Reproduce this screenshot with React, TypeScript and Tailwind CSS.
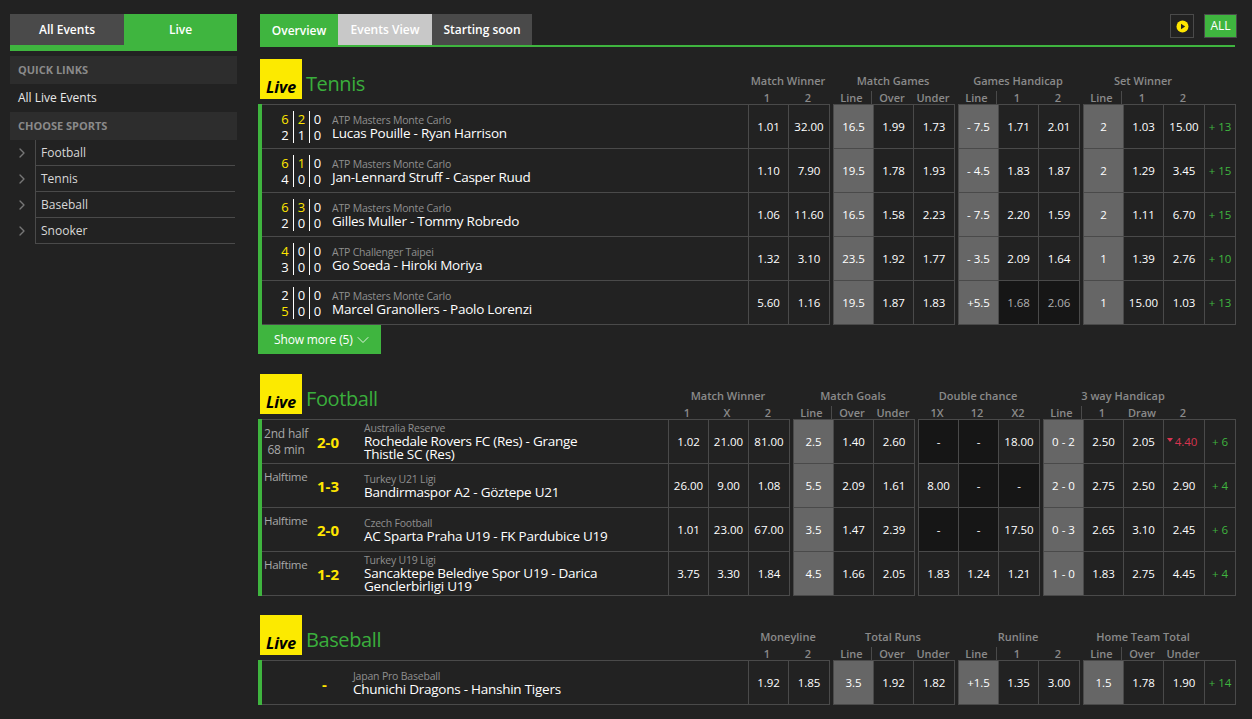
import type { ReactNode } from 'react';
import { ChevronRight, ChevronDown } from 'lucide-react';

type Cell = string | { v: string; dark?: boolean; dim?: boolean; down?: boolean };

type Col = { title: string; subs: string[] };

type Row = {
  info: ReactNode;
  groups: Cell[][];
  more: string;
};

const d = (v: string): Cell => ({ v, dark: true, dim: v !== '-' });
const dash: Cell = { v: '-', dark: true };

function SetScores({ a, b, hi }: { a: string[]; b: string[]; hi: string[] }) {
  return (
    <div className="ml-[15px] flex w-[48px] shrink-0 text-[13px] leading-[16px]">
      {a.map((top, i) => (
        <div
          key={i}
          className={`flex h-[32px] w-[16px] flex-col items-center justify-center ${i > 0 ? 'border-l border-white' : ''}`}
        >
          <span className={hi[i] === 'a' ? 'text-[#ffe600]' : 'text-white'}>{top}</span>
          <span className={hi[i] === 'b' ? 'text-[#ffe600]' : 'text-white'}>{b[i]}</span>
        </div>
      ))}
    </div>
  );
}

function TennisInfo({ a, b, hi, league, name }: { a: string[]; b: string[]; hi: string[]; league: string; name: string }) {
  return (
    <div className="flex h-full items-center">
      <SetScores a={a} b={b} hi={hi} />
      <div className="ml-[7px]">
        <Names league={league} name={name} />
      </div>
    </div>
  );
}

function Names({ league, name }: { league: string; name: string }) {
  return (
    <div>
      <div className="text-[10.5px] leading-[13px] tracking-[-0.2px] text-[#8f8f8f]">{league}</div>
      <div className="text-[13.5px] leading-[13px] tracking-[-0.25px] text-white">{name}</div>
    </div>
  );
}

function FootballInfo({ time, score, league, name, top }: { time: string[]; score: string; league: string; name: string; top?: boolean }) {
  return (
    <div className="flex h-full items-center">
      <div className={`flex w-[46px] shrink-0 flex-col self-stretch whitespace-nowrap pl-[2px] leading-[16px] text-[#a8a8a8] ${top ? 'justify-start pt-[5px] text-[11.5px] tracking-[-0.3px]' : 'justify-center text-center text-[12px] tracking-[-0.2px]'}`}>
        {time.map((t) => (
          <span key={t}>{t}</span>
        ))}
      </div>
      <div className="ml-[9px] mt-[1px] w-[47px] shrink-0 text-[15px] font-bold text-[#ffe600]">{score}</div>
      <div className="w-[250px]">
        <Names league={league} name={name} />
      </div>
    </div>
  );
}

function BaseballInfo({ league, name }: { league: string; name: string }) {
  return (
    <div className="flex h-full items-center">
      <div className="ml-[60px] mt-[3px] w-[31px] shrink-0 text-[15px] font-bold text-[#ffe600]">-</div>
      <Names league={league} name={name} />
    </div>
  );
}

function OddCell({ cell, line, last, top }: { cell: Cell; line: boolean; last: boolean; top: boolean }) {
  const c = typeof cell === 'string' ? { v: cell } : cell;
  const o = c as { v: string; dark?: boolean; dim?: boolean; down?: boolean };
  return (
    <div
      className={`relative flex h-full items-center justify-center border-b border-l border-[#4a4a4a] text-[11.5px] ${top ? 'border-t' : ''} ${last ? 'w-[41px]' : 'w-[40px]'} ${line ? 'bg-[#666666]' : o.dark ? 'bg-[#161616]' : ''} ${o.dim ? 'text-[#b0b0b0]' : o.down ? 'pr-[4px] text-[#d8344f]' : 'text-white'}`}
    >
      {o.down && <span className="mb-[3px] mr-[2px] border-x-[3px] border-t-[4px] border-x-transparent border-t-[#d8344f]" />}
      {o.v}
    </div>
  );
}

function Section({ title, cols, rows, children }: { title: string; cols: Col[]; rows: Row[]; children?: ReactNode }) {
  return (
    <section>
      <div className="flex h-[45px] items-start">
        <div className="ml-[2px] flex h-[40px] w-[42px] shrink-0 items-end justify-center bg-[#fcea00] pb-[1px] text-[16px] font-bold italic leading-[22px] text-black">
          Live
        </div>
        <div className="ml-[4px] mt-[10px] flex-1 text-[20px] leading-[30px] tracking-[-0.4px] text-[#3aae3c]">{title}</div>
        <div className="flex">
          {cols.map((col, i) => (
            <div key={col.title} className={`${i > 0 ? 'ml-[3px]' : ''} ${i === cols.length - 1 ? 'pr-[32px]' : ''}`}>
              <div className="mt-[15px] h-[17px] text-center text-[11px] font-semibold leading-[14px] text-[#8a8a8a]">{col.title}</div>
              <div className="flex h-[13px] text-[11px] font-semibold leading-[13px] text-[#8a8a8a]">
                {col.subs.map((s, j) => (
                  <div
                    key={j}
                    className={`text-center ${j === col.subs.length - 1 ? 'w-[42px]' : 'w-[40px]'} ${s === 'Line' ? 'border-r border-[#4a4a4a]' : ''}`}
                  >
                    {s}
                  </div>
                ))}
              </div>
            </div>
          ))}
        </div>
      </div>
      <div className="border-l-[4px] border-[#3fb53f]">
        {rows.map((row, r) => (
          <div key={r} className={`flex ${r === 0 ? 'h-[45px]' : 'h-[44px]'}`}>
            <div className={`min-w-0 flex-1 border-b border-[#4a4a4a] ${r === 0 ? 'border-t' : ''}`}>{row.info}</div>
            {row.groups.map((g, i) => (
              <div key={i} className={`flex ${i > 0 ? 'ml-[3px]' : ''} ${i < row.groups.length - 1 ? 'border-r border-[#4a4a4a]' : ''}`}>
                {g.map((cell, j) => (
                  <OddCell key={j} cell={cell} line={cols[i].subs[j] === 'Line'} last={j === g.length - 1} top={r === 0} />
                ))}
              </div>
            ))}
            <div className={`flex w-[32px] items-center justify-center border-x border-b border-[#4a4a4a] text-[11.5px] text-[#3fb53f] ${r === 0 ? 'border-t' : ''}`}>
              {row.more}
            </div>
          </div>
        ))}
      </div>
      {children}
    </section>
  );
}

const tennisCols: Col[] = [
  { title: 'Match Winner', subs: ['1', '2'] },
  { title: 'Match Games', subs: ['Line', 'Over', 'Under'] },
  { title: 'Games Handicap', subs: ['Line', '1', '2'] },
  { title: 'Set Winner', subs: ['Line', '1', '2'] },
];

const tennisRows: Row[] = [
  {
    info: <TennisInfo a={['6', '2', '0']} b={['2', '1', '0']} hi={['a', 'a', '']} league="ATP Masters Monte Carlo" name="Lucas Pouille - Ryan Harrison" />,
    groups: [['1.01', '32.00'], ['16.5', '1.99', '1.73'], ['- 7.5', '1.71', '2.01'], ['2', '1.03', '15.00']],
    more: '+ 13',
  },
  {
    info: <TennisInfo a={['6', '1', '0']} b={['4', '0', '0']} hi={['a', 'a', '']} league="ATP Masters Monte Carlo" name="Jan-Lennard Struff - Casper Ruud" />,
    groups: [['1.10', '7.90'], ['19.5', '1.78', '1.93'], ['- 4.5', '1.83', '1.87'], ['2', '1.29', '3.45']],
    more: '+ 15',
  },
  {
    info: <TennisInfo a={['6', '3', '0']} b={['2', '0', '0']} hi={['a', 'a', '']} league="ATP Masters Monte Carlo" name="Gilles Muller - Tommy Robredo" />,
    groups: [['1.06', '11.60'], ['16.5', '1.58', '2.23'], ['- 7.5', '2.20', '1.59'], ['2', '1.11', '6.70']],
    more: '+ 15',
  },
  {
    info: <TennisInfo a={['4', '0', '0']} b={['3', '0', '0']} hi={['a', '', '']} league="ATP Challenger Taipei" name="Go Soeda - Hiroki Moriya" />,
    groups: [['1.32', '3.10'], ['23.5', '1.92', '1.77'], ['- 3.5', '2.09', '1.64'], ['1', '1.39', '2.76']],
    more: '+ 10',
  },
  {
    info: <TennisInfo a={['2', '0', '0']} b={['5', '0', '0']} hi={['b', '', '']} league="ATP Masters Monte Carlo" name="Marcel Granollers - Paolo Lorenzi" />,
    groups: [['5.60', '1.16'], ['19.5', '1.87', '1.83'], ['+5.5', d('1.68'), d('2.06')], ['1', '15.00', '1.03']],
    more: '+ 13',
  },
];

const footballCols: Col[] = [
  { title: 'Match Winner', subs: ['1', 'X', '2'] },
  { title: 'Match Goals', subs: ['Line', 'Over', 'Under'] },
  { title: 'Double chance', subs: ['1X', '12', 'X2'] },
  { title: '3 way Handicap', subs: ['Line', '1', 'Draw', '2'] },
];

const footballRows: Row[] = [
  {
    info: <FootballInfo time={['2nd half', '68 min']} score="2-0" league="Australia Reserve" name="Rochedale Rovers FC (Res) - Grange Thistle SC (Res)" />,
    groups: [['1.02', '21.00', '81.00'], ['2.5', '1.40', '2.60'], [dash, dash, '18.00'], ['0 - 2', '2.50', '2.05', { v: '4.40', down: true }]],
    more: '+ 6',
  },
  {
    info: <FootballInfo top time={['Halftime']} score="1-3" league="Turkey U21 Ligi" name="Bandirmaspor A2 - Göztepe U21" />,
    groups: [['26.00', '9.00', '1.08'], ['5.5', '2.09', '1.61'], ['8.00', dash, dash], ['2 - 0', '2.75', '2.50', '2.90']],
    more: '+ 4',
  },
  {
    info: <FootballInfo top time={['Halftime']} score="2-0" league="Czech Football" name="AC Sparta Praha U19 - FK Pardubice U19" />,
    groups: [['1.01', '23.00', '67.00'], ['3.5', '1.47', '2.39'], [dash, dash, '17.50'], ['0 - 3', '2.65', '3.10', '2.45']],
    more: '+ 6',
  },
  {
    info: <FootballInfo top time={['Halftime']} score="1-2" league="Turkey U19 Ligi" name="Sancaktepe Belediye Spor U19 - Darica Genclerbirligi U19" />,
    groups: [['3.75', '3.30', '1.84'], ['4.5', '1.66', '2.05'], ['1.83', '1.24', '1.21'], ['1 - 0', '1.83', '2.75', '4.45']],
    more: '+ 4',
  },
];

const baseballCols: Col[] = [
  { title: 'Moneyline', subs: ['1', '2'] },
  { title: 'Total Runs', subs: ['Line', 'Over', 'Under'] },
  { title: 'Runline', subs: ['Line', '1', '2'] },
  { title: 'Home Team Total', subs: ['Line', 'Over', 'Under'] },
];

const baseballRows: Row[] = [
  {
    info: <BaseballInfo league="Japan Pro Baseball" name="Chunichi Dragons - Hanshin Tigers" />,
    groups: [['1.92', '1.85'], ['3.5', '1.92', '1.82'], ['+1.5', '1.35', '3.00'], ['1.5', '1.78', '1.90']],
    more: '+ 14',
  },
];

function Sidebar() {
  return (
    <aside className="w-[227px] shrink-0">
      <div className="flex h-[37px] border-b-[6px] border-[#3fb53f] text-[12px] font-semibold text-white">
        <div className="flex w-[114px] items-center justify-center bg-[#4a4a4a]">All Events</div>
        <div className="flex flex-1 items-center justify-center bg-[#3fb53f]">Live</div>
      </div>
      <div className="mt-[5px] flex h-[28px] items-center bg-[#2d2d2d] pl-[8px] text-[11px] font-bold text-[#8a8a8a]">QUICK LINKS</div>
      <div className="flex h-[28px] items-center pl-[8px] text-[12px] text-[#e8e8e8]">All Live Events</div>
      <div className="flex h-[28px] items-center bg-[#2d2d2d] pl-[8px] text-[11px] font-bold text-[#8a8a8a]">CHOOSE SPORTS</div>
      {['Football', 'Tennis', 'Baseball', 'Snooker'].map((s) => (
        <div key={s} className="flex h-[26px] items-stretch">
          <div className="flex w-[25px] items-center justify-end pr-[5px] text-[#777777]">
            <ChevronRight size={16} strokeWidth={2} />
          </div>
          <div className="mr-[2px] flex flex-1 items-center border-b border-l border-[#4a4a4a] pl-[5px] text-[12px] text-[#d8d8d8]">{s}</div>
        </div>
      ))}
    </aside>
  );
}

function TopTabs() {
  return (
    <div className="ml-[2px] mr-[1px] flex h-[33px] items-start">
      <div className="flex h-[33px] w-[78px] items-center justify-center bg-[#3fb53f] text-[12px] font-semibold text-white">Overview</div>
      <div className="flex flex-1 items-start border-b-[2px] border-[#3fb53f]">
        <div className="flex h-[31px] w-[94px] items-center justify-center bg-[#c8c8c8] text-[12px] font-semibold text-white">Events View</div>
        <div className="flex h-[31px] w-[100px] items-center justify-center bg-[#4a4a4a] text-[12px] font-semibold text-white">Starting soon</div>
        <div className="flex h-[31px] flex-1 items-start justify-end">
          <div className="flex h-[24px] w-[24px] items-center justify-center border border-[#4a4a4a]">
            <svg width="13" height="13" viewBox="0 0 13 13">
              <circle cx="6.5" cy="6.5" r="6" fill="#ffe600" />
              <path d="M5 3.8 L9.2 6.5 L5 9.2 Z" fill="#222222" />
            </svg>
          </div>
          <div className="ml-[10px] mr-[-2px] flex h-[24px] w-[33px] items-center justify-center border border-[#4a4a4a] bg-[#3fb53f] text-[12px] text-white">ALL</div>
        </div>
      </div>
    </div>
  );
}

export default function App() {
  return (
    <div className="flex h-[719px] overflow-hidden bg-[#222222] pl-[10px] pt-[14px] font-['Open_Sans',sans-serif]">
      <Sidebar />
      <main className="ml-[21px] w-[978px] shrink-0">
        <TopTabs />
        <div className="mt-[12px]">
          <Section title="Tennis" cols={tennisCols} rows={tennisRows}>
            <div className="flex h-[29px] w-[123px] items-center bg-[#3fb53f] pl-[16px] text-[12px] tracking-[-0.15px] text-white">
              Show more (5) <ChevronDown size={20} strokeWidth={1} />
            </div>
          </Section>
        </div>
        <div className="mt-[20px]">
          <Section title="Football" cols={footballCols} rows={footballRows} />
        </div>
        <div className="mt-[19px]">
          <Section title="Baseball" cols={baseballCols} rows={baseballRows} />
        </div>
      </main>
    </div>
  );
}
